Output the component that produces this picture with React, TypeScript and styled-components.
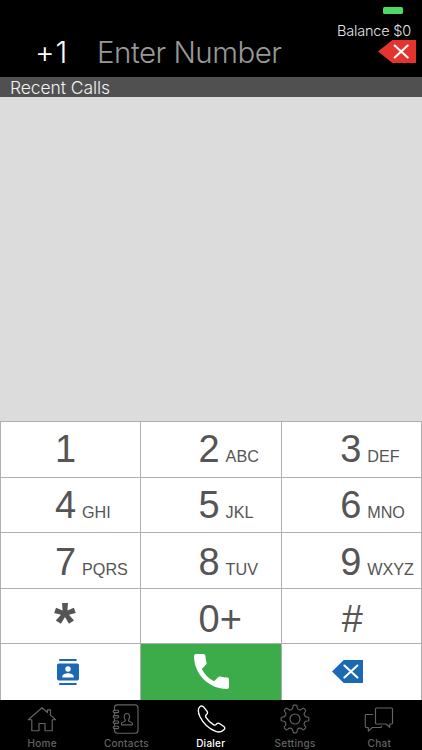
import React from "react";
import styled, { createGlobalStyle } from "styled-components";

const GlobalStyle = createGlobalStyle`
  * { box-sizing: border-box; }
  body { margin: 0; background: #000; }
`;

const Screen = styled.main`
  width: 422px;
  height: 750px;
  display: flex;
  flex-direction: column;
  overflow: hidden;
  background: #000;
  font-family: Inter, "Liberation Sans", sans-serif;
`;

const Header = styled.header`
  height: 77px;
  display: flex;
  flex-direction: column;
`;

const StatusBar = styled.div`
  height: 22px;
  padding: 7px 19px 0 0;
  display: flex;
  justify-content: flex-end;
`;

const Battery = styled.div`
  width: 20px;
  height: 7px;
  border-radius: 1.5px;
  background: #4cd964;
`;

const EntryRow = styled.div`
  height: 55px;
  display: flex;
`;

const Prefix = styled.div`
  width: 97px;
  padding: 13px 0 0 35px;
  font-size: 30px;
  line-height: 35px;
  font-weight: 300;
  letter-spacing: 1px;
  color: #fff;
`;

const NumberField = styled.div`
  width: 220px;
  padding-top: 13px;
  font-size: 29.5px;
  line-height: 35px;
  font-weight: 300;
  letter-spacing: -0.5px;
  white-space: nowrap;
  color: #999;
`;

const Account = styled.div`
  flex: 1;
  display: flex;
  flex-direction: column;
  align-items: flex-end;
`;

const Balance = styled.div`
  height: 18px;
  padding-right: 11px;
  font-size: 14.5px;
  line-height: 17px;
  font-weight: 300;
  letter-spacing: -0.2px;
  white-space: nowrap;
  color: #e4e4e4;
`;

const ClearButton = styled.button`
  width: 38px;
  height: 23px;
  margin-right: 6px;
  padding: 0;
  border: 0;
  background: none;
  svg { display: block; }
`;

const SectionTitle = styled.h2`
  height: 20px;
  margin: 0;
  padding-left: 10px;
  background: #505050;
  color: #f2f2f2;
  font-size: 17.5px;
  line-height: 21px;
  font-weight: 300;
  letter-spacing: -0.08px;
`;

const CallList = styled.section`
  height: 324px;
  background: #dcdcdc;
`;

const Keypad = styled.section`
  width: 422px;
  height: 279px;
  display: grid;
  grid-template-columns: 139px 140px 139px;
  grid-template-rows: 55px 54px 55px 54px 56px;
  gap: 1px;
  padding: 1px 1px 0;
  background: #b0afb0;
`;

const Key = styled.button<{ $left: number; $top: number }>`
  display: flex;
  align-items: baseline;
  padding: ${(p) => p.$top}px 0 0 ${(p) => p.$left}px;
  border: 0;
  background: #fff;
  color: #555;
  font-family: "Liberation Sans", Arial, sans-serif;
  text-align: left;
  white-space: nowrap;
`;

const Digit = styled.span<{ $star?: boolean }>`
  width: 27px;
  font-size: ${(p) => (p.$star ? 56 : 38)}px;
  line-height: ${(p) => (p.$star ? 56 : 44)}px;
  font-weight: ${(p) => (p.$star ? 700 : 400)};
`;

const Letters = styled.span`
  font-size: 16.2px;
  line-height: 20px;
`;

const Action = styled.button<{ $call?: boolean; $shift?: number }>`
  display: flex;
  align-items: center;
  justify-content: center;
  padding: 0 ${(p) => p.$shift ?? 0}px 1px 0;
  border: 0;
  background: ${(p) => (p.$call ? "#3cab4a" : "#fff")};
`;

const TabBar = styled.nav`
  height: 50px;
  display: grid;
  grid-template-columns: repeat(5, 84.3px);
`;

const Tab = styled.a<{ $active?: boolean }>`
  display: flex;
  flex-direction: column;
  align-items: center;
  padding-top: 4px;
  color: ${(p) => (p.$active ? "#fff" : "#646464")};
  svg { display: block; }
`;

const TabLabel = styled.span`
  margin-top: 3px;
  font-size: 10px;
  line-height: 12px;
  font-weight: 500;
  letter-spacing: 0.25px;
`;

const BackspaceIcon = ({ color, width, height }: { color: string; width: number; height: number }) => (
  <svg width={width} height={height} viewBox={`0 0 ${width} ${height}`}>
    <path d={`M0 ${height / 2} L${width * 0.38} 0H${width}V${height}H${width * 0.38}Z`} fill={color} />
    <path
      d={`m${width * 0.61 - 6.5} ${height / 2 - 6} 13 12m0-12-13 12`}
      stroke="#fff"
      strokeWidth="2.1"
      strokeLinecap="round"
    />
  </svg>
);

const ContactCardIcon = () => (
  <svg width="22" height="26" viewBox="0 0 22 26" fill="#1b69b4">
    <path d="M2.2 0h17.4v2H2.2zM2.2 24h17.4v2H2.2z" />
    <rect x="0" y="4.5" width="22" height="17" rx="1.8" />
    <circle cx="11" cy="10" r="2.7" fill="#fff" />
    <path d="M5.3 18.5v-1c0-2 3.7-3.2 5.7-3.2s5.7 1.2 5.7 3.2v1z" fill="#fff" />
  </svg>
);

const HandsetIcon = () => (
  <svg width="35" height="35" viewBox="0 0 35 35" fill="#fff">
    <path d="M2 0h7.5c1.1 0 1.8.8 1.9 1.9.1 2.4.5 4.7 1.2 6.8.2.7 0 1.4-.5 1.9l-4.3 4.3c2.7 5.4 6.9 9.6 12.3 12.3l4.2-4.2c.5-.5 1.3-.7 2-.5 2.1.7 4.4 1.1 6.8 1.1 1.1 0 1.9.9 1.9 2V33c0 1.1-.8 2-1.9 2C14.8 35 0 20.2 0 2 0 .9.9 0 2 0Z" />
  </svg>
);

const line = { fill: "none", stroke: "currentColor", strokeWidth: 1.15, strokeLinejoin: "round", strokeLinecap: "round" } as const;

const HomeIcon = () => (
  <svg width="30" height="30" viewBox="0 0 30 30" {...line}>
    <path d="m1.3 15.7 13.7-12 5.5 4.8V5.8h3v5.3l5 4.6h-3.3v11H18v-7.2h-6v7.2H4.8v-11Z" />
  </svg>
);

const ContactsIcon = () => (
  <svg width="30" height="30" viewBox="0 0 30 30" {...line}>
    <path d="M3.5 6V3.7Q3.5.8 6.4.8H24q3 0 3 3v22.4q0 3-3 3H6.4q-2.9 0-2.9-3V24M3.5 9.5v2M3.5 15v2M3.5 20.5v1" />
    <rect x="2.2" y="6.2" width="5.5" height="2.4" rx="1.2" />
    <rect x="2.2" y="11.6" width="5.5" height="2.4" rx="1.2" />
    <rect x="2.2" y="17" width="5.5" height="2.4" rx="1.2" />
    <rect x="2.2" y="22.2" width="5.5" height="2.4" rx="1.2" />
    <path d="M10.5 20.8v-1.7c0-1.3 3.9-1 3.9-2.5 0-.8-1.2-1.7-1.2-3.8s1-3.3 2.7-3.3 2.7 1.2 2.7 3.3-1.2 3-1.2 3.8c0 1.5 3.9 1.2 3.9 2.5v1.7Z" />
  </svg>
);

const DialerIcon = () => (
  <svg width="30" height="30" viewBox="0 0 30 30" {...line} strokeWidth={1.35}>
    <path d="M4.100 2.500c1.400-1 2.700-.5 3.800.8l3 3.900c1 1.400.7 2.600-.6 3.600-1.200.9-1 1.600-.2 2.800 2 3 4.500 5.200 7.300 7 1.300.9 2 .9 2.900-.3 1-1.300 2.100-1.500 3.500-.6l3.700 2.600c1.600 1.100 1.600 2.300.4 3.500-2.300 2.500-5 2.800-8.200 1.600-7-2.600-12.300-7.700-15.700-14.600C2.200 8.800 1.500 4.500 4.100 2.500Z" />
  </svg>
);

const polar = (radius: number, degrees: number) => {
  const a = (degrees * Math.PI) / 180;
  return `${(15 + radius * Math.sin(a)).toFixed(2)} ${(15 - radius * Math.cos(a)).toFixed(2)}`;
};

const gearOutline =
  Array.from({ length: 8 }, (_, i) => {
    const c = i * 45;
    return [
      `${i ? "L" : "M"}${polar(10.6, c - 15)}`,
      `Q${polar(11, c - 11)} ${polar(12.4, c - 9.5)}`,
      `Q${polar(14, c - 8)} ${polar(13.9, c - 5)}`,
      `L${polar(13.9, c + 5)}`,
      `Q${polar(14, c + 8)} ${polar(12.4, c + 9.5)}`,
      `Q${polar(11, c + 11)} ${polar(10.6, c + 15)}`,
      `Q${polar(9.5, c + 22.5)} ${polar(10.6, c + 30)}`,
    ].join("");
  }).join("") + "Z";

const SettingsIcon = () => (
  <svg width="30" height="30" viewBox="0 0 30 30" {...line}>
    <circle cx="15" cy="15" r="5" />
    <path d={gearOutline} />
  </svg>
);

const ChatIcon = () => (
  <svg width="30" height="30" viewBox="0 0 30 30" {...line}>
    <path d="M12.5 4h15q1 0 1 1v14q0 1-1 1h-1.700v3.300L22 20h-9.500q-1 0-1-1V5q0-1 1-1Z" />
    <path d="M8.800 10.500H2.300q-1 0-1 1v11q0 1 1 1h2v3.600l4-3.600h8.200q1 0 1-1v-.2" />
  </svg>
);

const keys = [
  ["1", ""], ["2", "ABC"], ["3", "DEF"],
  ["4", "GHI"], ["5", "JKL"], ["6", "MNO"],
  ["7", "PQRS"], ["8", "TUV"], ["9", "WXYZ"],
  ["*", ""], ["0+", ""], ["#", ""],
];
const columnInset = [54, 57.6, 58.2];
const rowInset = [5, 5, 7, 8];
const nudge: Record<string, number> = { "#": 1.5, "*": -1 };

const keyTop = (digit: string, index: number) => (digit === "*" ? 5 : rowInset[Math.floor(index / 3)]);

const tabs = [
  { label: "Home", Icon: HomeIcon },
  { label: "Contacts", Icon: ContactsIcon },
  { label: "Dialer", Icon: DialerIcon },
  { label: "Settings", Icon: SettingsIcon },
  { label: "Chat", Icon: ChatIcon },
];

export default function App() {
  return (
    <Screen>
      <GlobalStyle />
      <Header>
        <StatusBar><Battery /></StatusBar>
        <EntryRow>
          <Prefix>+1</Prefix>
          <NumberField>Enter Number</NumberField>
          <Account>
            <Balance>Balance $0</Balance>
            <ClearButton aria-label="Clear"><BackspaceIcon color="#e5342e" width={38} height={23} /></ClearButton>
          </Account>
        </EntryRow>
      </Header>
      <SectionTitle>Recent Calls</SectionTitle>
      <CallList />
      <Keypad>
        {keys.map(([digit, letters], i) => (
          <Key key={digit} $left={columnInset[i % 3] + (nudge[digit] ?? 0)} $top={keyTop(digit, i)}>
            <Digit $star={digit === "*"}>{digit}</Digit>
            {letters && <Letters>{letters}</Letters>}
          </Key>
        ))}
        <Action aria-label="Contacts" $shift={5}><ContactCardIcon /></Action>
        <Action aria-label="Call" $call><HandsetIcon /></Action>
        <Action aria-label="Delete" $shift={9}><BackspaceIcon color="#1b69b4" width={31} height={23} /></Action>
      </Keypad>
      <TabBar>
        {tabs.map(({ label, Icon }) => (
          <Tab key={label} $active={label === "Dialer"}>
            <Icon />
            <TabLabel>{label}</TabLabel>
          </Tab>
        ))}
      </TabBar>
    </Screen>
  );
}
